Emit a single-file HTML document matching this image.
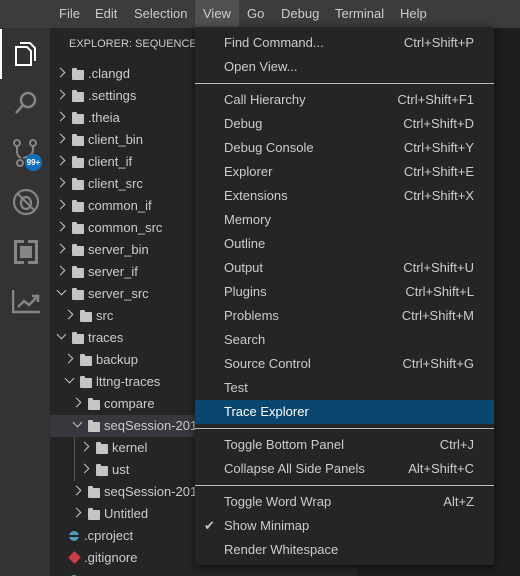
<!DOCTYPE html>
<html><head><style>
*{margin:0;padding:0;box-sizing:border-box}
html{width:520px;height:576px;overflow:hidden}
body{width:520px;height:576px;overflow:hidden;background:#1e1e1e;font-family:"Liberation Sans",sans-serif;font-size:13px;color:#cccccc;position:relative}
.mb{position:absolute;left:0;top:0;width:520px;height:28px;background:#3c3c3c}
.mb span{position:absolute;top:6px;font-size:13px;color:#cccccc}
.ab{position:absolute;left:0;top:28px;width:50px;height:548px;background:#333333}
.sb{position:absolute;left:50px;top:28px;width:307px;height:548px;background:#252526}
.hdr{position:absolute;left:69px;top:38px;font-size:11px;color:#cccccc}
.row{position:absolute;left:50px;width:307px;height:22px;line-height:22px;color:#cccccc}
.row .ch{position:absolute;top:6px;width:7px;height:7px;border-right:1.3px solid #c5c5c5;border-bottom:1.3px solid #c5c5c5}
.row .ch.r{transform:rotate(-45deg)}
.row .ch.d{transform:rotate(45deg);top:4px}
.row .f{position:absolute;top:7px;width:12px;height:10px;background:#c5c5c5;border-radius:1px}
.row .f:before{content:"";position:absolute;left:0;top:-2px;width:5px;height:3px;background:#c5c5c5;border-radius:1px 1px 0 0}
.row .t{position:absolute;top:0}
.menu{position:absolute;left:195px;top:27px;width:299px;height:538px;background:#252526;box-shadow:0 2px 8px rgba(0,0,0,.6)}
.mi{position:absolute;left:0;width:299px;height:24px;line-height:24px}
.mi .l{position:absolute;left:29px}
.mi .k{position:absolute;right:20px}
.sep{position:absolute;left:0;width:299px;height:1px;background:#bbbbbb}
</style></head><body>
<div class="mb">
<span style="left:59px">File</span><span style="left:95px">Edit</span><span style="left:134px">Selection</span>
<div style="position:absolute;left:195px;top:0;width:44px;height:28px;background:#505050"></div>
<span style="left:203px">View</span><span style="left:247px">Go</span><span style="left:281px">Debug</span><span style="left:335px">Terminal</span><span style="left:400px">Help</span>
</div>
<div class="ab">
<div style="position:absolute;left:0;top:1px;width:2px;height:50px;background:#fff"></div>
<svg style="position:absolute;left:13px;top:13px" width="24" height="26" viewBox="0 0 24 26" fill="none" stroke="#fff" stroke-width="2"><path d="M3 6h11l4 4v14H3z"/><path d="M7 2h10l5 5v13"/></svg>
<svg style="position:absolute;left:13px;top:62px" width="26" height="26" viewBox="0 0 26 26" fill="none" stroke="#858585" stroke-width="2.5"><circle cx="15" cy="10" r="7"/><path d="M10 15L3 23"/></svg>
<svg style="position:absolute;left:12px;top:110px" width="26" height="30" viewBox="0 0 26 30" fill="none" stroke="#858585" stroke-width="2"><circle cx="5" cy="5" r="3"/><circle cx="21" cy="5" r="3"/><circle cx="8" cy="25" r="3"/><path d="M5 8v6q0 4 4 6M21 8v4q0 6-10 8"/></svg>
<div style="position:absolute;left:25px;top:126px;width:17px;height:17px;border-radius:50%;background:#0e70c0;color:#fff;font-size:8px;font-weight:bold;line-height:17px;text-align:center">99+</div>
<svg style="position:absolute;left:12px;top:160px" width="28" height="28" viewBox="0 0 28 28" fill="none" stroke="#858585" stroke-width="2.2"><circle cx="14" cy="14" r="12"/><path d="M6 6l16 16"/><ellipse cx="14" cy="15" rx="5" ry="6"/></svg>
<svg style="position:absolute;left:14px;top:212px" width="24" height="24" viewBox="0 0 24 24" fill="#858585"><path d="M0 0h10v3H3v18h7v3H0zM14 0h10v24H14v-3h7V3h-7z"/><rect x="6" y="6" width="12" height="12"/></svg>
<svg style="position:absolute;left:12px;top:262px" width="28" height="24" viewBox="0 0 28 24" fill="none" stroke="#858585" stroke-width="2.5"><path d="M1 0v22h27"/><path d="M6 17l6-6 5 4 8-8"/><path d="M20 6h6v6" /></svg>
</div>
<div class="sb"></div>
<div class="hdr">EXPLORER: SEQUENCE</div>
<div style="position:absolute;left:50px;top:415px;width:307px;height:22px;background:#37373d"></div>
<div style="position:absolute;left:74px;top:437px;width:1px;height:44px;background:#585858"></div>

<div class="row" style="top:63px"><i class="ch r" style="left:7px"></i><i class="f" style="left:22px"></i><span class="t" style="left:38px">.clangd</span></div>
<div class="row" style="top:85px"><i class="ch r" style="left:7px"></i><i class="f" style="left:22px"></i><span class="t" style="left:38px">.settings</span></div>
<div class="row" style="top:107px"><i class="ch r" style="left:7px"></i><i class="f" style="left:22px"></i><span class="t" style="left:38px">.theia</span></div>
<div class="row" style="top:129px"><i class="ch r" style="left:7px"></i><i class="f" style="left:22px"></i><span class="t" style="left:38px">client_bin</span></div>
<div class="row" style="top:151px"><i class="ch r" style="left:7px"></i><i class="f" style="left:22px"></i><span class="t" style="left:38px">client_if</span></div>
<div class="row" style="top:173px"><i class="ch r" style="left:7px"></i><i class="f" style="left:22px"></i><span class="t" style="left:38px">client_src</span></div>
<div class="row" style="top:195px"><i class="ch r" style="left:7px"></i><i class="f" style="left:22px"></i><span class="t" style="left:38px">common_if</span></div>
<div class="row" style="top:217px"><i class="ch r" style="left:7px"></i><i class="f" style="left:22px"></i><span class="t" style="left:38px">common_src</span></div>
<div class="row" style="top:239px"><i class="ch r" style="left:7px"></i><i class="f" style="left:22px"></i><span class="t" style="left:38px">server_bin</span></div>
<div class="row" style="top:261px"><i class="ch r" style="left:7px"></i><i class="f" style="left:22px"></i><span class="t" style="left:38px">server_if</span></div>
<div class="row" style="top:283px"><i class="ch d" style="left:8px"></i><i class="f" style="left:22px"></i><span class="t" style="left:38px">server_src</span></div>
<div class="row" style="top:305px"><i class="ch r" style="left:15px"></i><i class="f" style="left:30px"></i><span class="t" style="left:46px">src</span></div>
<div class="row" style="top:327px"><i class="ch d" style="left:8px"></i><i class="f" style="left:22px"></i><span class="t" style="left:38px">traces</span></div>
<div class="row" style="top:349px"><i class="ch r" style="left:15px"></i><i class="f" style="left:30px"></i><span class="t" style="left:46px">backup</span></div>
<div class="row" style="top:371px"><i class="ch d" style="left:16px"></i><i class="f" style="left:30px"></i><span class="t" style="left:46px">lttng-traces</span></div>
<div class="row" style="top:393px"><i class="ch r" style="left:23px"></i><i class="f" style="left:38px"></i><span class="t" style="left:54px">compare</span></div>
<div class="row" style="top:415px"><i class="ch d" style="left:24px"></i><i class="f" style="left:38px"></i><span class="t" style="left:54px">seqSession-2019</span></div>
<div class="row" style="top:437px"><i class="ch r" style="left:31px"></i><i class="f" style="left:46px"></i><span class="t" style="left:62px">kernel</span></div>
<div class="row" style="top:459px"><i class="ch r" style="left:31px"></i><i class="f" style="left:46px"></i><span class="t" style="left:62px">ust</span></div>
<div class="row" style="top:481px"><i class="ch r" style="left:23px"></i><i class="f" style="left:38px"></i><span class="t" style="left:54px">seqSession-2019</span></div>
<div class="row" style="top:503px"><i class="ch r" style="left:23px"></i><i class="f" style="left:38px"></i><span class="t" style="left:54px">Untitled</span></div>
<div class="row" style="top:525px"><i style="position:absolute;left:19px;top:6px;width:10px;height:10px;border-radius:50%;background:#519aba"></i><i style="position:absolute;left:19px;top:10px;width:10px;height:2px;background:#252526"></i><span class="t" style="left:34px">.cproject</span></div>
<div class="row" style="top:547px"><i style="position:absolute;left:20px;top:6px;width:9px;height:9px;background:#cc3e44;transform:rotate(45deg)"></i><span class="t" style="left:34px">.gitignore</span></div>
<div class="row" style="top:569px;height:7px;overflow:hidden"><i style="position:absolute;left:19px;top:6px;width:10px;height:10px;border-radius:50%;background:#519aba"></i></div>

<div class="menu">
<div class="mi" style="top:4px"><span class="l">Find Command...</span><span class="k">Ctrl+Shift+P</span></div>
<div class="mi" style="top:28px"><span class="l">Open View...</span></div>
<div class="sep" style="top:56px"></div>
<div class="mi" style="top:61px"><span class="l">Call Hierarchy</span><span class="k">Ctrl+Shift+F1</span></div>
<div class="mi" style="top:85px"><span class="l">Debug</span><span class="k">Ctrl+Shift+D</span></div>
<div class="mi" style="top:109px"><span class="l">Debug Console</span><span class="k">Ctrl+Shift+Y</span></div>
<div class="mi" style="top:133px"><span class="l">Explorer</span><span class="k">Ctrl+Shift+E</span></div>
<div class="mi" style="top:157px"><span class="l">Extensions</span><span class="k">Ctrl+Shift+X</span></div>
<div class="mi" style="top:181px"><span class="l">Memory</span></div>
<div class="mi" style="top:205px"><span class="l">Outline</span></div>
<div class="mi" style="top:229px"><span class="l">Output</span><span class="k">Ctrl+Shift+U</span></div>
<div class="mi" style="top:253px"><span class="l">Plugins</span><span class="k">Ctrl+Shift+L</span></div>
<div class="mi" style="top:277px"><span class="l">Problems</span><span class="k">Ctrl+Shift+M</span></div>
<div class="mi" style="top:301px"><span class="l">Search</span></div>
<div class="mi" style="top:325px"><span class="l">Source Control</span><span class="k">Ctrl+Shift+G</span></div>
<div class="mi" style="top:349px"><span class="l">Test</span></div>
<div class="mi" style="top:373px;background:#094771;color:#fff"><span class="l">Trace Explorer</span></div>
<div class="sep" style="top:401px"></div>
<div class="mi" style="top:406px"><span class="l">Toggle Bottom Panel</span><span class="k">Ctrl+J</span></div>
<div class="mi" style="top:430px"><span class="l">Collapse All Side Panels</span><span class="k">Alt+Shift+C</span></div>
<div class="sep" style="top:458px"></div>
<div class="mi" style="top:463px"><span class="l">Toggle Word Wrap</span><span class="k">Alt+Z</span></div>
<div class="mi" style="top:487px"><span style="position:absolute;left:9px;color:#c5c5c5">✔</span><span class="l">Show Minimap</span></div>
<div class="mi" style="top:511px"><span class="l">Render Whitespace</span></div>
</div>
</body></html>
